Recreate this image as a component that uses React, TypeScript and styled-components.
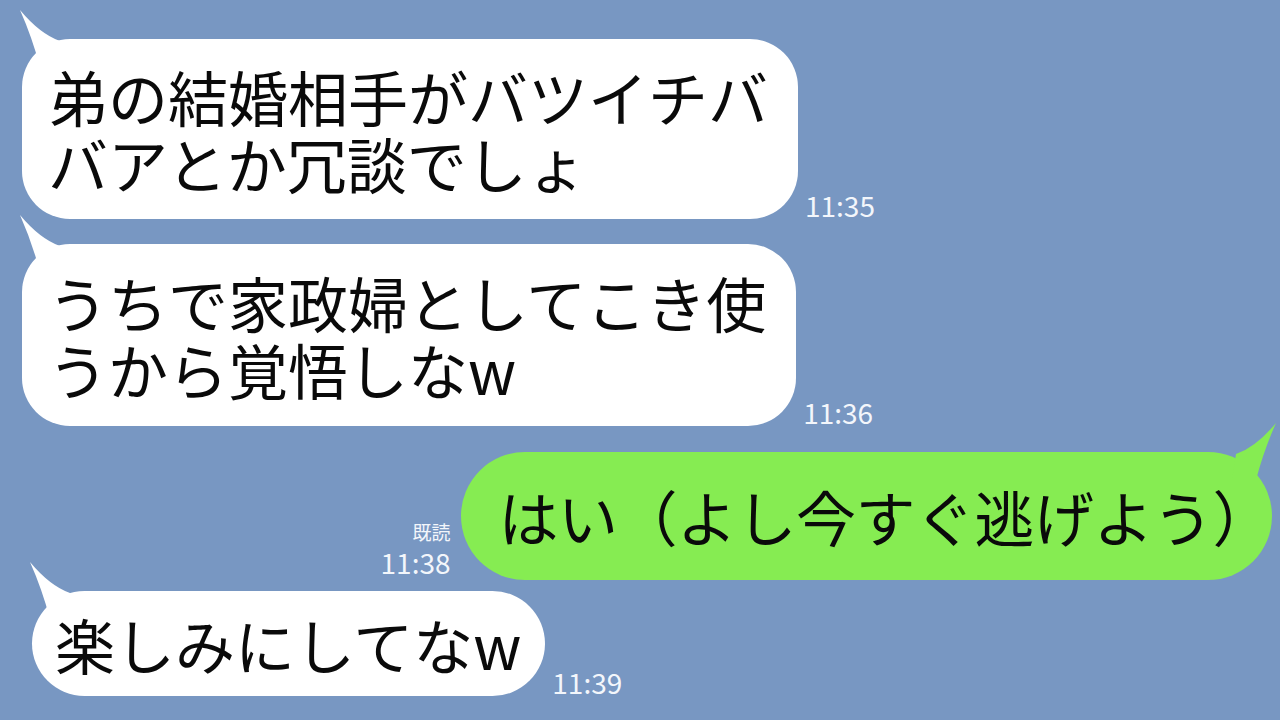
import styled, { createGlobalStyle } from 'styled-components';

/* ---- page ---- */

const GlobalStyle = createGlobalStyle`
  html, body {
    margin: 0;
    padding: 0;
    background: #7897c2;
  }
  body {
    font-family: 'Noto Sans CJK JP', 'Noto Sans', sans-serif;
  }
`;

const Chat = styled.div`
  display: flex;
  flex-direction: column;
  width: 1280px;
  height: 720px;
  overflow: hidden;
  background: #7897c2;
`;

const Row = styled.div<{ $mine?: boolean; $top: number; $inset: number }>`
  display: flex;
  align-items: flex-end;
  justify-content: ${({ $mine }) => ($mine ? 'flex-end' : 'flex-start')};
  gap: ${({ $mine }) => ($mine ? '10px' : '7px')};
  margin-top: ${({ $top }) => $top}px;
  padding: ${({ $mine, $inset }) => ($mine ? `0 ${$inset}px 0 0` : `0 0 0 ${$inset}px`)};
`;

/* ---- bubbles ---- */

const Bubble = styled.div<{ $mine?: boolean; $pad: string; $radius: number }>`
  position: relative;
  padding: ${({ $pad }) => $pad};
  border-radius: ${({ $radius }) => $radius}px;
  background: ${({ $mine }) => ($mine ? '#86ec52' : '#ffffff')};
  color: #0a0a0a;
  font-size: 60px;
  line-height: 67px;
  letter-spacing: ${({ $mine }) => ($mine ? '-0.5px' : '0')};
  white-space: nowrap;
`;

const TailSvg = styled.svg<{ $mine?: boolean }>`
  position: absolute;
  top: -32px;
  width: 50px;
  height: 62px;
  ${({ $mine }) => ($mine ? 'right: -6px; transform: scaleX(-1);' : 'left: -4px;')}
`;

const Tail = ({ mine }: { mine?: boolean }) => (
  <TailSvg $mine={mine} viewBox="0 0 50 62">
    <path
      d="M2 3 Q 22 27 42 34 L 46 60 L 22 60 Q 14 30 2 3 Z"
      fill={mine ? '#86ec52' : '#ffffff'}
    />
  </TailSvg>
);

/* ---- meta ---- */

const Meta = styled.div<{ $lift?: number }>`
  display: flex;
  flex-direction: column;
  align-items: flex-end;
  gap: 7px;
  margin-bottom: ${({ $lift }) => $lift ?? 0}px;
  color: #f3f6fb;
`;

const Read = styled.span`
  font-size: 19px;
  line-height: 1;
`;

const Time = styled.span`
  font-size: 28px;
  line-height: 1;
`;

const App = () => {
  return (
    <>
      <GlobalStyle />
      <Chat>
        <Row $top={39} $inset={22}>
          <Bubble $pad="23px 30px 23px 26px" $radius={48}>
            <Tail />
            弟の結婚相手がバツイチバ
            <br />
            バアとか冗談でしょ
          </Bubble>
          <Meta>
            <Time>11:35</Time>
          </Meta>
        </Row>

        <Row $top={25} $inset={22}>
          <Bubble $pad="24px 30px 24px 26px" $radius={48}>
            <Tail />
            うちで家政婦としてこき使
            <br />
            うから覚悟しなw
          </Bubble>
          <Meta>
            <Time>11:36</Time>
          </Meta>
        </Row>

        <Row $mine $top={26} $inset={8}>
          <Meta $lift={4}>
            <Read>既読</Read>
            <Time>11:38</Time>
          </Meta>
          <Bubble $mine $pad="30px 0 31px 38px" $radius={64}>
            <Tail mine />
            はい（よし今すぐ逃げよう）
          </Bubble>
        </Row>

        <Row $top={11} $inset={32}>
          <Bubble $pad="19px 24px 19px 23px" $radius={53}>
            <Tail />
            楽しみにしてなw
          </Bubble>
          <Meta>
            <Time>11:39</Time>
          </Meta>
        </Row>
      </Chat>
    </>
  );
};

export default App;
